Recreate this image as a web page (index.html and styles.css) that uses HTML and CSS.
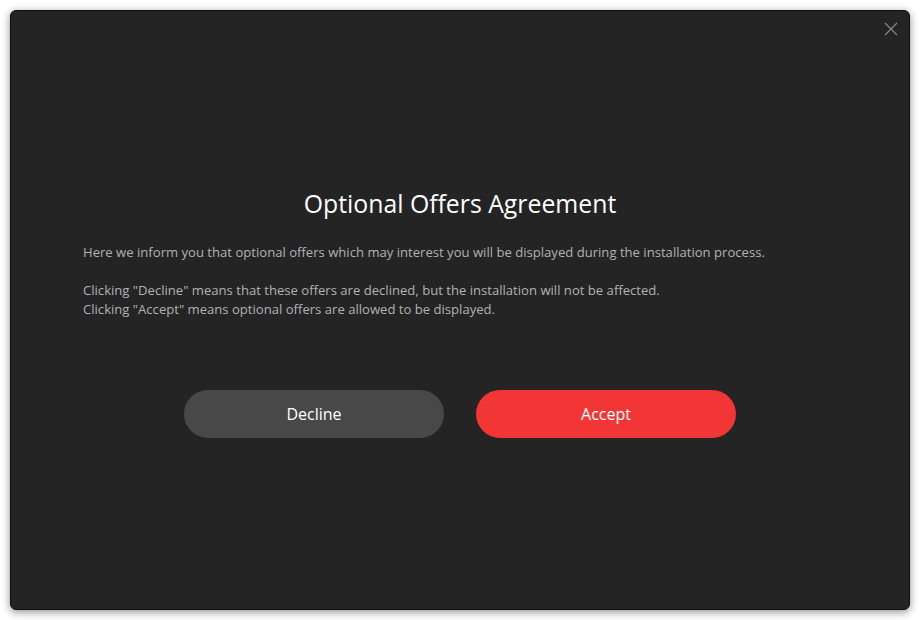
FILE: index.html
```html
<!DOCTYPE html>
<html lang="en">
<head>
	<meta charset="UTF-8">
	<title>Optional Offers Agreement</title>
	<link rel="stylesheet" href="styles.css">
</head>
<body>
<div class="dialog">
	<span class="close" title="Close">
		<svg width="14" height="14" viewBox="0 0 14 14"><path d="M1 1L13 13M13 1L1 13" stroke="#8a8a8a" stroke-width="1.1" fill="none"/></svg>
	</span>
	<div class="content">
		<h1 class="title">Optional Offers Agreement</h1>
		<div class="text">
			<p>Here we inform you that optional offers which may interest you will be displayed during the installation process.</p>
			<p>Clicking "Decline" means that these offers are declined, but the installation will not be affected.<br>Clicking "Accept" means optional offers are allowed to be displayed.</p>
		</div>
		<div class="btns">
			<a href="javascript:" class="btn decline">Decline</a>
			<a href="javascript:" class="btn accept">Accept</a>
		</div>
	</div>
</div>
</body>
</html>
```

FILE: styles.css
```css
*{
	margin: 0;
	padding: 0;
}
body{
	background: #fff;
	padding: 10px;
	font-family: "Open Sans", "Noto Sans", sans-serif;
}
.dialog{
	width: 898px;
	height: 598px;
	background: #242424;
	border: 1px solid #111;
	border-radius: 6px;
	box-shadow: 0 2px 8px rgba(0,0,0,0.45);
	position: relative;
}
.close{
	position: absolute;
	top: 11px;
	right: 11px;
	width: 14px;
	height: 14px;
	cursor: pointer;
}
.close svg{
	display: block;
}
.content{
	padding: 176px 72px 0;
	display: flex;
	flex-direction: column;
}
.title{
	font-weight: normal;
	font-size: 24.8px;
	line-height: 32px;
	color: #fff;
	text-align: center;
}
.text{
	margin-top: 24px;
	font-size: 13.1px;
	line-height: 19px;
	color: #b0b2b4;
}
.text p + p{
	margin-top: 19px;
}
.btns{
	margin-top: 71px;
	display: flex;
	justify-content: center;
	gap: 32px;
}
.btn{
	display: block;
	width: 260px;
	height: 48px;
	line-height: 48px;
	border-radius: 24px;
	text-align: center;
	font-size: 16px;
	color: #fff;
	text-decoration: none;
}
.decline{
	background: #484848;
}
.accept{
	background: #f23535;
}
```
